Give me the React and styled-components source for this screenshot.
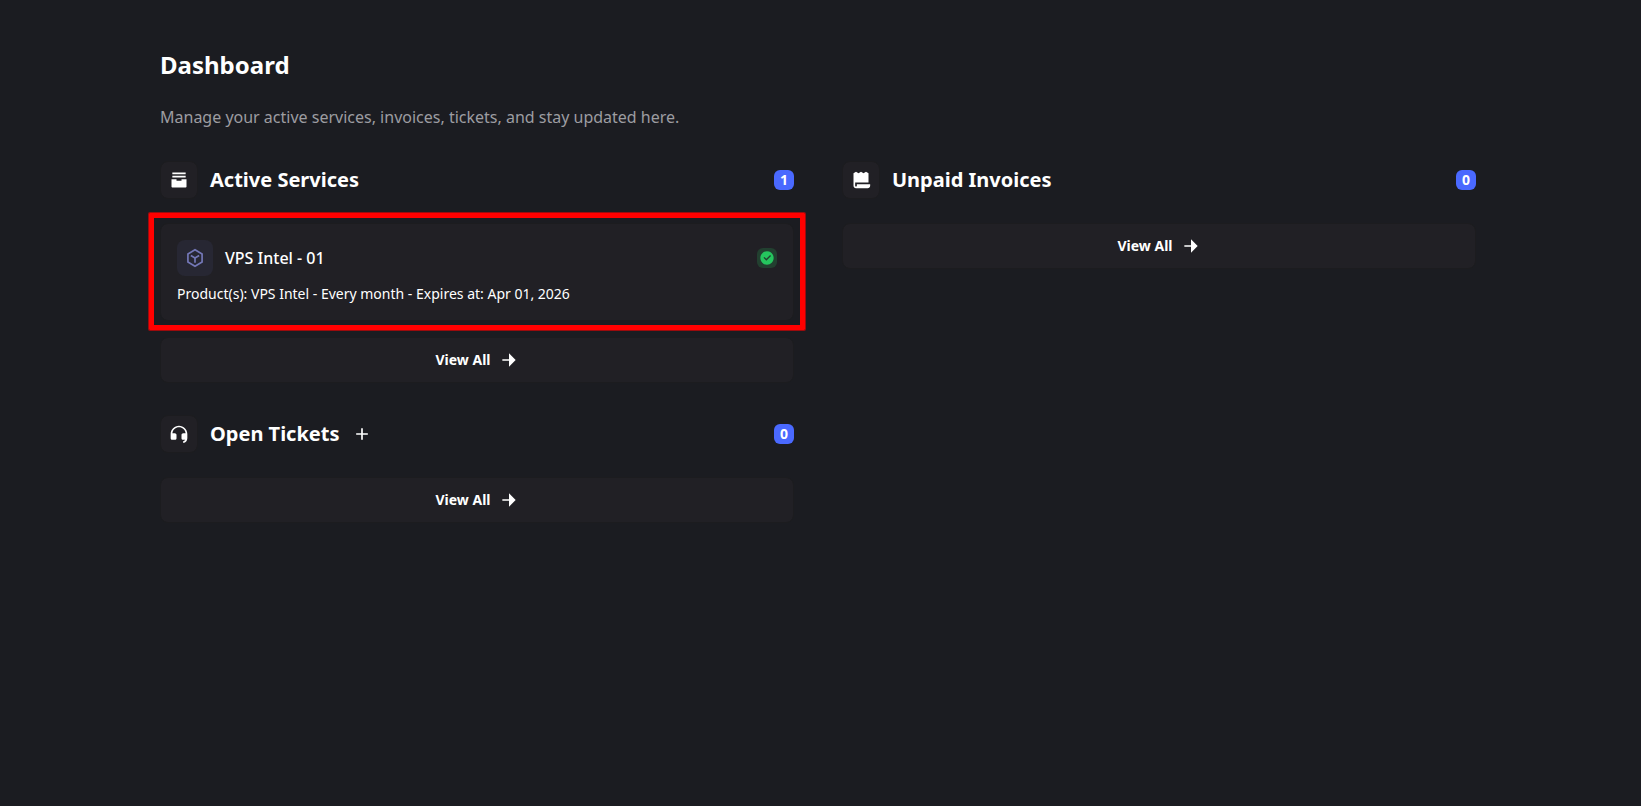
import React from "react";
import styled, { createGlobalStyle } from "styled-components";
import {
  RiAddFill,
  RiArchiveStackFill,
  RiArrowRightFill,
  RiCheckboxCircleFill,
  RiCustomerServiceFill,
  RiInstanceLine,
  RiReceiptFill,
} from "react-icons/ri";

const GlobalStyle = createGlobalStyle`
  *, *::before, *::after { box-sizing: border-box; }
  body {
    margin: 0;
    background: #1b1c21;
    color: #ffffff;
    font-family: "Noto Sans", sans-serif;
    font-size: 16px;
    line-height: 24px;
  }
  h1, h2, h3, p { margin: 0; }
  svg { display: block; flex: none; }
`;

const Page = styled.main`
  padding: 49px 165px 48px 160px;

  @media (max-width: 1100px) {
    padding: 48px 24px;
  }
`;

const Title = styled.h1`
  font-size: 24px;
  line-height: 32px;
  font-weight: 700;
`;

const Subtitle = styled.p`
  margin-top: 24px;
  color: #9d9da1;
`;

const Columns = styled.div`
  display: grid;
  grid-template-columns: repeat(2, minmax(0, 1fr));
  gap: 48px;
  align-items: start;
  margin-top: 32px;

  @media (max-width: 800px) {
    grid-template-columns: minmax(0, 1fr);
  }
`;

const Column = styled.div`
  display: flex;
  flex-direction: column;
  gap: 32px;
`;

const Section = styled.section`
  display: flex;
  flex-direction: column;
  gap: 16px;
`;

const SectionHeader = styled.header`
  display: flex;
  align-items: center;
  gap: 12px;
  margin-bottom: 8px;
`;

const SectionIcon = styled.span`
  padding: 8px;
  border: 1px solid #1c1c1f;
  border-radius: 8px;
  background: #212025;
  font-size: 20px;
`;

const SectionTitle = styled.h2`
  font-size: 20px;
  line-height: 28px;
  font-weight: 700;
`;

const AddLink = styled.a`
  color: inherit;
  font-size: 20px;
`;

const CountBadge = styled.span`
  display: grid;
  place-items: center;
  width: 20px;
  height: 20px;
  margin-left: auto;
  border-radius: 6px;
  background: #4a69ff;
  font-size: 14px;
  line-height: 20px;
  font-weight: 700;
`;

const Highlight = styled.div`
  position: relative;

  &::after {
    content: "";
    position: absolute;
    inset: -10px -11px -9px;
    border: 5px solid #ff0000;
    border-radius: 1px;
    box-shadow: 0 0 0 1px #9c0b0d;
    pointer-events: none;
  }
`;

const ServiceCard = styled.a`
  display: flex;
  flex-direction: column;
  gap: 8px;
  padding: 16px;
  border: 1px solid #1c1c1f;
  border-radius: 8px;
  background: #212025;
  color: inherit;
  text-decoration: none;
`;

const ServiceHead = styled.div`
  display: flex;
  align-items: center;
  gap: 12px;
`;

const ServiceIcon = styled.span`
  padding: 8px;
  border-radius: 8px;
  background: #272733;
  color: #7478b8;
  font-size: 20px;
`;

const ServiceName = styled.h3`
  font-size: 16px;
  line-height: 24px;
  font-weight: 500;
`;

const StatusBadge = styled.span`
  margin-left: auto;
  padding: 2px;
  border-radius: 6px;
  background: #224030;
  color: #25c55e;
  font-size: 16px;
`;

const ServiceDetails = styled.p`
  font-size: 14px;
  line-height: 20px;
`;

const ViewAllLink = styled.a`
  display: flex;
  align-items: center;
  justify-content: center;
  gap: 8px;
  padding: 12px;
  border: 1px solid #1c1c1f;
  border-radius: 8px;
  background: #212025;
  color: inherit;
  font-size: 14px;
  line-height: 20px;
  font-weight: 700;
  text-decoration: none;
`;

function ViewAll({ href }) {
  return (
    <ViewAllLink href={href}>
      View All
      <RiArrowRightFill size={20} aria-hidden="true" />
    </ViewAllLink>
  );
}

function Widget({ icon: Icon, title, count, href, addHref, children }) {
  return (
    <Section>
      <SectionHeader>
        <SectionIcon>
          <Icon aria-hidden="true" />
        </SectionIcon>
        <SectionTitle>{title}</SectionTitle>
        {addHref && (
          <AddLink href={addHref} aria-label="Create ticket">
            <RiAddFill aria-hidden="true" />
          </AddLink>
        )}
        <CountBadge>{count}</CountBadge>
      </SectionHeader>
      {children}
      <ViewAll href={href} />
    </Section>
  );
}

export default function App() {
  return (
    <>
      <GlobalStyle />
      <Page>
        <Title>Dashboard</Title>
        <Subtitle>
          Manage your active services, invoices, tickets, and stay updated here.
        </Subtitle>
        <Columns>
          <Column>
            <Widget icon={RiArchiveStackFill} title="Active Services" count={1} href="#services">
              <Highlight>
                <ServiceCard href="#service-1">
                  <ServiceHead>
                    <ServiceIcon>
                      <RiInstanceLine aria-hidden="true" />
                    </ServiceIcon>
                    <ServiceName>VPS Intel - 01</ServiceName>
                    <StatusBadge>
                      <RiCheckboxCircleFill aria-label="Active" />
                    </StatusBadge>
                  </ServiceHead>
                  <ServiceDetails>
                    Product(s): VPS Intel - Every month - Expires at: Apr 01, 2026
                  </ServiceDetails>
                </ServiceCard>
              </Highlight>
            </Widget>
            <Widget
              icon={RiCustomerServiceFill}
              title="Open Tickets"
              count={0}
              href="#tickets"
              addHref="#new-ticket"
            />
          </Column>
          <Column>
            <Widget icon={RiReceiptFill} title="Unpaid Invoices" count={0} href="#invoices" />
          </Column>
        </Columns>
      </Page>
    </>
  );
}
